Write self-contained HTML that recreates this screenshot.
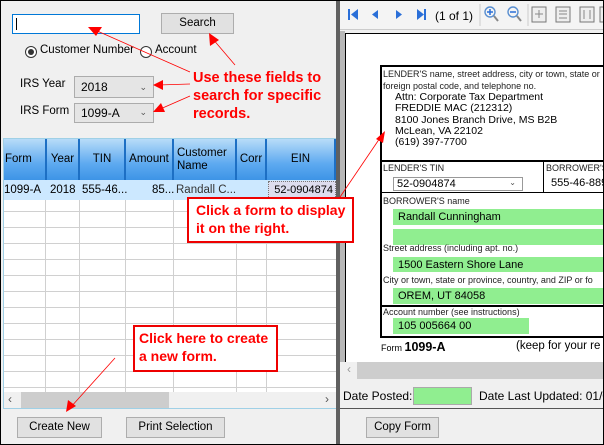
<!DOCTYPE html>
<html><head><meta charset="utf-8"><style>
*{box-sizing:border-box;margin:0;padding:0}
body{width:604px;height:445px;overflow:hidden;font-family:"Liberation Sans",sans-serif;font-size:12px;color:#000;background:#f0f0f0;position:relative;white-space:nowrap}
.a{position:absolute}
.btn{position:absolute;background:#e1e1e1;border:1px solid #adadad;text-align:center;font-size:11.5px;line-height:19px}
.combo{position:absolute;background:#e5e5e5;border:1px solid #acacac;padding-left:6px;font-size:12px;line-height:19px}
.hd{position:absolute;top:139px;height:41px;background:linear-gradient(#b8dcf8,#5eaaf0 60%,#3d94e6);border-right:2px solid #1d6fc4;font-size:11.5px;display:flex;align-items:center;justify-content:center;line-height:13px;color:#000}
.g{background:#90ee90;position:absolute;font-size:11px;padding-left:5px;line-height:16px;overflow:hidden}
.lbl{position:absolute;font-size:9px;color:#222}
.red{color:#f00;font-weight:bold;font-size:14.5px;line-height:18px;position:absolute}
.rbox{position:absolute;background:#fff;border:2px solid #e00}
#doc{position:absolute;left:345px;top:33px;width:259px;height:329px;overflow:hidden;background:#fff;border-left:1px solid #000;border-top:1px solid #000}
</style></head><body>
<div class="a" style="left:0;top:0;width:604px;height:445px;border:1px solid #000;z-index:50;pointer-events:none"></div>
<div class="a" style="left:12px;top:14px;width:128px;height:20px;background:#fff;border:1px solid #0078d7"></div>
<div class="a" style="left:16px;top:18px;width:1px;height:12px;background:#000"></div>
<div class="btn" style="left:161px;top:13px;width:73px;height:21px">Search</div>
<div class="a" style="left:25px;top:46px;width:12px;height:12px;border:1px solid #333;border-radius:50%;background:#fff"></div>
<div class="a" style="left:28px;top:49px;width:6px;height:6px;border-radius:50%;background:#333"></div>
<div class="a" style="left:40px;top:44px;font-size:11.5px">Customer Number</div>
<div class="a" style="left:140px;top:46px;width:12px;height:12px;border:1px solid #333;border-radius:50%;background:#fff"></div>
<div class="a" style="left:155px;top:44px;font-size:11.5px">Account</div>
<div class="a" style="left:20px;top:78px;font-size:11.5px">IRS Year</div>
<div class="combo" style="left:74px;top:76px;width:80px;height:22px;line-height:20px">2018<span class="a" style="right:6px;top:0;font-size:9px;color:#555">&#8964;</span></div>
<div class="a" style="left:20px;top:105px;font-size:11.5px">IRS Form</div>
<div class="combo" style="left:74px;top:103px;width:80px;height:20px">1099-A<span class="a" style="right:6px;top:-1px;font-size:9px;color:#555">&#8964;</span></div>
<div class="a" style="left:3px;top:138px;width:334px;height:271px;background:#fff;border:1px solid #9fd0e6"></div>
<div class="a" style="left:4px;top:180px;width:332px;height:212px;background:repeating-linear-gradient(#fff 0 15px,#d0d0d0 15px 16px);"></div>
<div class="a" style="left:4px;top:180px;width:332px;height:212px;background:linear-gradient(90deg,transparent 41px,#d0d0d0 41px 42px,transparent 42px 75px,#d0d0d0 75px 76px,transparent 76px 121px,#d0d0d0 121px 122px,transparent 122px 169px,#d0d0d0 169px 170px,transparent 170px 232px,#d0d0d0 232px 233px,transparent 233px 262px,#d0d0d0 262px 263px,transparent 263px)"></div>
<div class="hd" style="left:4px;width:43px;justify-content:flex-start;padding-left:1px">Form</div>
<div class="hd" style="left:47px;width:33px">Year</div>
<div class="hd" style="left:80px;width:46px">TIN</div>
<div class="hd" style="left:126px;width:48px">Amount</div>
<div class="hd" style="left:174px;width:63px;justify-content:flex-start;padding-left:3px;white-space:normal">Customer<br>Name</div>
<div class="hd" style="left:237px;width:30px">Corr</div>
<div class="hd" style="left:267px;width:69px">EIN</div>
<div class="a" style="left:4px;top:180px;width:332px;height:20px;background:#cce8ff;font-size:11.5px;line-height:20px">
<span class="a" style="left:0">1099-A</span><span class="a" style="left:46px">2018</span><span class="a" style="left:78px">555-46...</span><span class="a" style="left:148px">85...</span><span class="a" style="left:172px;color:#333">Randall C...</span>
<span class="a" style="left:264px;width:68px;height:18px;top:1px;border:1px dotted #777;background:#dde;line-height:16px;text-align:right;padding-right:2px;font-size:11px">52-0904874</span></div>
<div class="a" style="left:4px;top:392px;width:332px;height:16px;background:#f0f0f0"></div>
<div class="a" style="left:21px;top:392px;width:148px;height:16px;background:#cdcdcd"></div>
<div class="a" style="left:8px;top:392px;font-size:12px;color:#555">&#8249;</div>
<div class="a" style="left:325px;top:392px;font-size:12px;color:#555">&#8250;</div>
<div class="btn" style="left:17px;top:417px;width:85px;height:21px">Create New</div>
<div class="btn" style="left:126px;top:417px;width:99px;height:21px">Print Selection</div>
<div class="a" style="left:336px;top:0;width:4px;height:445px;background:#606060"></div>
<div class="a" style="left:340px;top:0;width:264px;height:30px;background:#f4f4f4;border-bottom:1px solid #ccc"></div>
<svg class="a" style="left:340px;top:0" width="264" height="30">
<g fill="#2a6fd8"><rect x="8" y="9" width="2" height="11"/><path d="M18 9v11l-7-5.5z"/><path d="M38 10v9l-6-4.5z"/><path d="M56 10v9l6-4.5z"/><path d="M77 9v11l7-5.5z"/><rect x="84" y="9" width="2" height="11"/></g>
<text x="95" y="20" font-family="Liberation Sans" font-size="12">(1 of 1)</text>
<line x1="140" y1="4" x2="140" y2="26" stroke="#ccc"/>
<g fill="none" stroke="#5a8fd0" stroke-width="1.4"><circle cx="150" cy="12" r="5"/><line x1="154" y1="16" x2="158" y2="21" stroke="#888" stroke-width="2"/><circle cx="173" cy="12" r="5"/><line x1="177" y1="16" x2="181" y2="21" stroke="#888" stroke-width="2"/></g>
<path d="M147 12h6M150 9v6M170 12h6" stroke="#2a6fd8" stroke-width="1.5"/>
<line x1="188" y1="4" x2="188" y2="26" stroke="#ccc"/>
<g fill="#eee" stroke="#777"><rect x="192" y="7" width="14" height="15"/><rect x="216" y="7" width="14" height="15"/><rect x="240" y="7" width="14" height="15"/><rect x="260" y="7" width="8" height="15"/></g>
<path d="M195 14h8M199 10v8M219 11h8M219 14h8M219 18h8M244 10v9M250 10v9" stroke="#888"/>
</svg>
<div class="a" style="left:340px;top:31px;width:5px;height:331px;background:#b8b8b8"></div>
<div id="doc">
<div class="a" style="left:34px;top:31px;width:240px;height:273px;border:2px solid #000;border-right:none"></div>
<div class="lbl" style="left:37px;top:35px;line-height:11.5px">LENDER'S name, street address, city or town, state or<br>foreign postal code, and telephone no.</div>
<div class="a" style="left:49px;top:58px;font-size:10.5px;line-height:11.3px">Attn: Corporate Tax Department<br>FREDDIE MAC (212312)<br>8100 Jones Branch Drive, MS B2B<br>McLean, VA 22102<br>(619) 397-7700</div>
<div class="a" style="left:35px;top:126px;width:230px;height:2px;background:#000"></div>
<div class="a" style="left:35px;top:158px;width:230px;height:1px;background:#000"></div>
<div class="a" style="left:197px;top:127px;width:1px;height:31px;background:#000"></div>
<div class="lbl" style="left:37px;top:129px">LENDER'S TIN</div>
<div class="a" style="left:47px;top:143px;width:130px;height:14px;border:1px solid #999;font-size:11px;line-height:12px;padding-left:3px;background:#fff">52-0904874<span class="a" style="right:6px;top:-1px;font-size:8px;color:#555">&#8964;</span></div>
<div class="lbl" style="left:200px;top:129px">BORROWER'S</div>
<div class="a" style="left:205px;top:143px;font-size:11px">555-46-889</div>
<div class="lbl" style="left:37px;top:162px">BORROWER'S name</div>
<div class="g" style="left:47px;top:175px;width:220px;height:16px">Randall Cunningham</div>
<div class="g" style="left:47px;top:195px;width:220px;height:16px"></div>
<div class="lbl" style="left:37px;top:209px">Street address (including apt. no.)</div>
<div class="g" style="left:47px;top:223px;width:220px;height:15px">1500 Eastern Shore Lane</div>
<div class="lbl" style="left:37px;top:241px">City or town, state or province, country, and ZIP or fo</div>
<div class="g" style="left:47px;top:254px;width:220px;height:16px">OREM, UT 84058</div>
<div class="a" style="left:35px;top:271px;width:230px;height:2px;background:#000"></div>
<div class="lbl" style="left:37px;top:273px">Account number (see instructions)</div>
<div class="g" style="left:47px;top:284px;width:136px;height:16px">105 005664 00</div>
<div class="a" style="left:34px;top:302px;width:230px;height:2px;background:#000"></div>
<div class="a" style="left:35px;top:306px;font-size:9px">Form <b style="font-size:12.5px">1099-A</b></div>
<div class="a" style="left:170px;top:306px;font-size:11.5px">(keep for your re</div>
</div>
<div class="a" style="left:345px;top:362px;width:259px;height:17px;background:#f0f0f0"></div>
<div class="a" style="left:357px;top:362px;width:247px;height:17px;background:#cdcdcd"></div>
<div class="a" style="left:347px;top:362px;font-size:12px;color:#999">&#8249;</div>
<div class="a" style="left:343px;top:389px;font-size:12px">Date Posted:</div>
<div class="a" style="left:413px;top:387px;width:59px;height:18px;background:#90ee90;border:1px solid #aaa"></div>
<div class="a" style="left:479px;top:389px;font-size:12px">Date Last Updated: 01/0</div>
<div class="a" style="left:340px;top:408px;width:264px;height:1px;background:#555"></div>
<div class="btn" style="left:366px;top:417px;width:73px;height:21px">Copy Form</div>
<svg class="a" style="left:0;top:0;z-index:10" width="604" height="445">
<g stroke="#f00" stroke-width="0.8" fill="none">
<line x1="190" y1="72" x2="95" y2="30"/><line x1="235" y1="65" x2="212" y2="38"/>
<line x1="190" y1="84" x2="158" y2="85"/><line x1="190" y1="96" x2="158" y2="110"/>
<line x1="338" y1="200" x2="382" y2="135"/><line x1="115" y1="358" x2="70" y2="408"/>
</g>
<g fill="#f00">
<path d="M88 27l14 0l-6 9z"/><path d="M209 33l10 7l-9 6z"/>
<path d="M153 85l10-5l0 10z"/><path d="M153 112l8-9l4 9z"/><path d="M385 131l-2 12l-7-4z"/><path d="M66 412l2-12l8 6z"/>
</g>
</svg>
<div class="red" style="left:193px;top:69px;z-index:11">Use these fields to<br>search for specific<br>records.</div>
<div class="rbox" style="left:187px;top:197px;width:167px;height:46px;z-index:11"></div>
<div class="red" style="left:196px;top:201px;z-index:12;font-size:14px">Click a form to display<br>it on the right.</div>
<div class="rbox" style="left:133px;top:325px;width:145px;height:47px;z-index:11"></div>
<div class="red" style="left:139px;top:329px;z-index:12;font-size:14px">Click here to create<br>a new form.</div>
</body></html>
